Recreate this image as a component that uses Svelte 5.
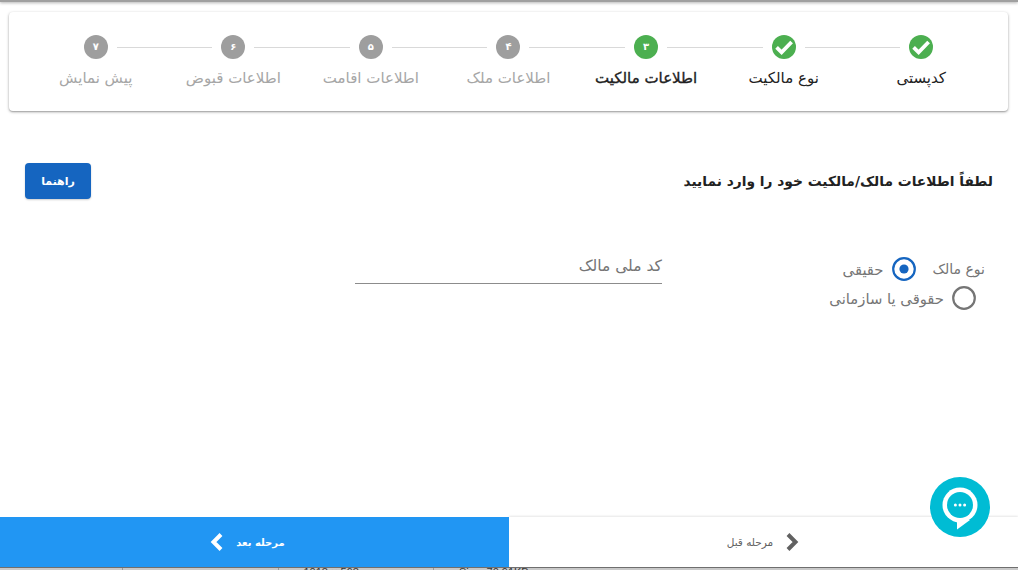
<script>
  const steps = [
    { label: 'کدپستی', state: 'done' },
    { label: 'نوع مالکیت', state: 'done' },
    { label: 'اطلاعات مالکیت', state: 'active', num: '۳' },
    { label: 'اطلاعات ملک', state: 'todo', num: '۴' },
    { label: 'اطلاعات اقامت', state: 'todo', num: '۵' },
    { label: 'اطلاعات قبوض', state: 'todo', num: '۶' },
    { label: 'پیش نمایش', state: 'todo', num: '۷' }
  ];
</script>

<div class="page" dir="rtl">
  <div class="topbar"></div>

  <div class="stepper">
    {#each steps as step, i}
      <div class="step {step.state}">
        <div class="track">
          <span class="line" class:hidden={i === 0}></span>
          {#if step.state === 'done'}
            <svg class="dot" viewBox="0 0 24 24">
              <circle cx="12" cy="12" r="12" fill="#4caf50" />
              <path d="M4.6 12.4l5 4.9 10-10.3" fill="none" stroke="#fff" stroke-width="3.8" />
            </svg>
          {:else}
            <span class="dot num">{step.num}</span>
          {/if}
          <span class="line" class:hidden={i === steps.length - 1}></span>
        </div>
        <div class="label">{step.label}</div>
      </div>
    {/each}
  </div>

  <div class="head">
    <h2>لطفاً اطلاعات مالک/مالکیت خود را وارد نمایید</h2>
    <button class="guide">راهنما</button>
  </div>

  <div class="form">
    <div class="owner-type">
      <div class="first-row">
        <span class="legend">نوع مالک</span>
        <label class="radio">
          <svg viewBox="0 0 24 24" class="ring">
            <circle cx="12" cy="12" r="10.8" fill="none" stroke="#1565c0" stroke-width="2.2" />
            <circle cx="12" cy="12" r="4.6" fill="#1565c0" />
          </svg>
          حقیقی
        </label>
      </div>
      <label class="radio second">
        <svg viewBox="0 0 24 24" class="ring">
          <circle cx="12" cy="12" r="10.8" fill="none" stroke="#757575" stroke-width="2.2" />
        </svg>
        حقوقی یا سازمانی
      </label>
    </div>
    <div class="field">کد ملی مالک</div>
  </div>

  <div class="spacer"></div>

  <div class="footer">
    <button class="nav prev">
      <svg viewBox="0 0 16 24" class="chev">
        <path d="M4 4.5l7.5 7.5-7.5 7.5" fill="none" stroke="#616161" stroke-width="4" />
      </svg>
      مرحله قبل
    </button>
    <button class="nav next">
      مرحله بعد
      <svg viewBox="0 0 16 24" class="chev">
        <path d="M12 4.5l-7.5 7.5 7.5 7.5" fill="none" stroke="#fff" stroke-width="4" />
      </svg>
    </button>
  </div>

  <div class="under" dir="ltr">
    <span class="cell"></span>
    <span class="cell">1018 × 568px</span>
    <span class="cell">Size: 70.91KB</span>
  </div>

  <button class="chat" aria-label="chat">
    <svg viewBox="0 0 60 60" width="60" height="60">
      <circle cx="30" cy="28" r="17.5" fill="#fff" />
      <path d="M27 43v9.5l13-9.5z" fill="#fff" />
      <circle cx="30" cy="28" r="13" fill="#00bcd4" />
      <circle cx="25.4" cy="28" r="1.5" fill="#fff" />
      <circle cx="30" cy="28" r="1.5" fill="#fff" />
      <circle cx="34.6" cy="28" r="1.5" fill="#fff" />
    </svg>
  </button>
</div>

<style>
  :global(body) {
    margin: 0;
    background: #fff;
  }

  :global(*) {
    box-sizing: border-box;
  }

  .page {
    position: relative;
    height: 570px;
    overflow: hidden;
    display: flex;
    flex-direction: column;
    font-family: 'DejaVu Sans', sans-serif;
    color: #212121;
  }

  .topbar {
    height: 2px;
    flex: none;
    background: #a0a0a0;
    box-shadow: 0 1px 3px rgba(0, 0, 0, 0.35);
  }

  .stepper {
    flex: none;
    display: flex;
    height: 99px;
    margin: 10px 10px 0 9px;
    padding: 23px 18px 0;
    background: #fff;
    border-radius: 4px;
    box-shadow: 0 1px 3px rgba(0, 0, 0, 0.35), 0 1px 1px rgba(0, 0, 0, 0.12);
  }

  .step {
    flex: 1;
    min-width: 0;
    display: flex;
    flex-direction: column;
    align-items: center;
  }

  .track {
    width: 100%;
    display: flex;
    align-items: center;
  }

  .line {
    flex: 1;
    height: 1px;
    background: #d9d9d9;
  }

  .track .line:first-child {
    margin-left: 9px;
  }

  .track .line:last-child {
    margin-right: 9px;
  }

  .hidden {
    visibility: hidden;
  }

  .dot {
    flex: none;
    width: 24px;
    height: 24px;
  }

  .num {
    border-radius: 50%;
    background: #9e9e9e;
    color: #fff;
    font-size: 10px;
    font-weight: 700;
    line-height: 24px;
    text-align: center;
  }

  .active .num {
    background: #4caf50;
  }

  .label {
    margin-top: 9px;
    font-size: 15px;
    line-height: 20px;
    white-space: nowrap;
    color: #212121;
  }

  .active .label {
    -webkit-text-stroke: 0.35px #212121;
  }

  .todo .label {
    color: #a6a6a6;
  }

  .head {
    flex: none;
    display: flex;
    justify-content: space-between;
    align-items: center;
    margin-top: 52px;
    padding: 0 25px;
  }

  h2 {
    margin: 0;
    font-size: 13.8px;
    font-weight: 700;
    color: #212121;
  }

  .guide {
    width: 66px;
    height: 36px;
    border: 0;
    border-radius: 4px;
    background: #1565c0;
    color: #fff;
    font: 700 11px 'DejaVu Sans', sans-serif;
    box-shadow: 0 1px 2px rgba(0, 0, 0, 0.2);
  }

  .form {
    flex: none;
    display: flex;
    margin-top: 49px;
    padding-right: 33px;
  }

  .owner-type {
    width: 323px;
    padding-top: 9px;
    display: flex;
    flex-direction: column;
    gap: 5px;
  }

  .first-row {
    display: flex;
    align-items: center;
    gap: 17px;
  }

  .legend {
    font-size: 14px;
    line-height: 20px;
    color: #757575;
  }

  .radio {
    display: flex;
    align-items: center;
    gap: 8px;
    height: 24px;
    font-size: 14.8px;
    color: #757575;
  }

  .second {
    margin-right: 9px;
  }

  .ring {
    width: 24px;
    height: 24px;
    flex: none;
  }

  .field {
    width: 307px;
    height: 36px;
    padding-top: 8px;
    font-size: 15.5px;
    line-height: 20px;
    color: #757575;
    border-bottom: 1px solid #8c8c8c;
  }

  .spacer {
    flex: 1;
  }

  .footer {
    flex: none;
    display: flex;
    height: 50px;
  }

  .nav {
    flex: 0 0 50%;
    border: 0;
    padding: 0;
    display: flex;
    align-items: center;
    justify-content: center;
    gap: 11px;
    font-size: 10.5px;
    font-family: 'DejaVu Sans', sans-serif;
  }

  .prev {
    background: #fff;
    color: #616161;
    box-shadow: 0 -1px 2px rgba(0, 0, 0, 0.1);
  }

  .next {
    padding-right: 15px;
    background: #2196f3;
    color: #fff;
    font-size: 10px;
    font-weight: 700;
  }

  .chev {
    width: 16px;
    height: 24px;
  }

  .under {
    flex: none;
    height: 3px;
    padding-left: 122px;
    display: flex;
    overflow: hidden;
    border-top: 1px solid #6f6f6f;
    background: #c9c9c9;
    font: 11px/9px 'Liberation Sans', sans-serif;
    color: #333;
  }

  .cell {
    width: 155.5px;
    padding-left: 25px;
    border-left: 1px solid #999;
    white-space: nowrap;
  }

  .chat {
    position: absolute;
    left: 930px;
    top: 477px;
    width: 60px;
    height: 60px;
    padding: 0;
    border: 0;
    border-radius: 50%;
    background: #00bcd4;
  }
</style>
